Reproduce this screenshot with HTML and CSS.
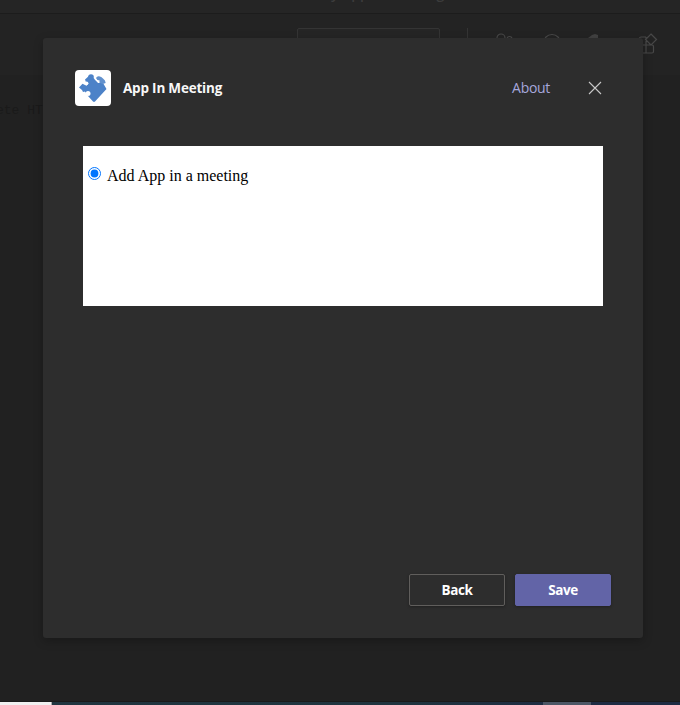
FILE: index.html
```html
<!DOCTYPE html>
<html lang="en">
<head>
<meta charset="utf-8">
<title>App In Meeting</title>
<link rel="stylesheet" href="styles.css">
</head>
<body>
<div class="window">
  <div class="titlebar"><span class="window-title">My App In Meeting</span></div>
  <div class="toolbar">
    <div class="field"></div>
    <div class="divider"></div>
    <div class="tools">
      <svg width="22" height="22" viewBox="0 0 22 22"><circle cx="7" cy="5" r="4"/><circle cx="15.500" cy="6" r="2.500"/><path d="M1 20v-4q0-3 3-3h6q3 0 3 3v4"/></svg>
      <svg width="22" height="22" viewBox="0 0 22 22"><circle cx="10" cy="10" r="8.500"/></svg>
      <svg width="22" height="22" viewBox="0 0 22 22"><path class="solid" d="M-2 10V5l4-3 3-1 3 1v8z"/></svg>
      <svg width="22" height="22" viewBox="0 0 22 22"><path d="M8 4H3q-1.500 0-1.500 1.500v13q0 1.500 1.500 1.500h11q1.500 0 1.500-1.500v-5q0-1.500-1.500-1.500h-13M8 4v16M13 1l5.500 5.500-5.500 5.500-5.500-5.500z"/></svg>
    </div>
  </div>
  <div class="content"><span class="code">ete HT</span></div>
  <div class="taskbar"><div class="search"></div><div class="task"></div></div>
</div>
<div class="dialog">
  <header>
    <svg class="logo" width="36" height="36" viewBox="0 0 36 36">
      <rect width="36" height="36" rx="4" fill="#fff"/>
      <g fill="#4c82c8">
        <path d="M10 9.500L15 5l4 3.500 4 4.500h5l3.500 6L20 31.500q-1 .8-2 0L13 26l-4-6 3-5z"/>
        <circle cx="16" cy="7" r="2.800"/>
        <path d="M4 17.500l3.500-3.700L12 16v5l-4 1-1-2z"/>
      </g>
      <path fill="#6291cd" d="M21 8q1-2 3-1.700 2.500.2 4 2.200 2.500 1.500 2.700 4.500l-3 1-3.500-1.500.5-2-2.700-.5z"/>
      <circle cx="11.500" cy="13.300" r="1.900" fill="#fff"/>
      <circle cx="13" cy="23.500" r="2.500" fill="#fff"/>
      <path d="M20 8.500q2 2.500 4 3.500" stroke="#fff" stroke-width="1.300" fill="none"/>
    </svg>
    <h1>App In Meeting</h1>
    <a class="about">About</a>
    <svg class="close" width="14" height="14" viewBox="0 0 14 14"><path d="M1 1l12 12M13 1L1 13"/></svg>
  </header>
  <main>
    <label><input type="radio" checked><span>Add App in a meeting</span></label>
  </main>
  <footer>
    <button>Back</button>
    <button class="primary">Save</button>
  </footer>
</div>
</body>
</html>
```

FILE: styles.css
```css
* { box-sizing: border-box; }
html, body { height: 100%; }
body {
  margin: 0;
  overflow: hidden;
  background: #212121;
  font-family: "Open Sans", sans-serif;
}
.window {
  height: 705px;
  display: flex;
  flex-direction: column;
}
.titlebar {
  height: 14px;
  flex: none;
  background: #252525;
  border-bottom: 1px solid #1c1c1c;
  overflow: hidden;
  padding-left: 318px;
}
.window-title {
  display: block;
  margin-top: -15px;
  font-size: 14px;
  font-weight: 600;
  line-height: 18px;
  color: #3c3c3c;
  white-space: nowrap;
}
.toolbar {
  height: 61px;
  flex: none;
  background: #232323;
  display: flex;
  padding: 14px 0 0 297px;
  overflow: hidden;
}
.field {
  width: 143px;
  height: 32px;
  background: #252525;
  border: 1px solid #343434;
  border-radius: 2px;
}
.divider {
  width: 1px;
  height: 32px;
  margin-left: 27px;
  background: #343434;
}
.tools {
  display: flex;
  gap: 26px;
  margin: 5px 0 0 26px;
}
.tools svg { fill: none; stroke: #484848; stroke-width: 1.2; overflow: visible; }
.tools .solid { fill: #414141; stroke: none; }
.content {
  flex: 1;
  background: #212121;
  padding-top: 28px;
  border-bottom: 1px solid #1a1a1a;
}
.code {
  display: block;
  margin-left: -4px;
  font: 13px/16px "Liberation Mono", monospace;
  color: #1a1a1a;
}
.taskbar {
  height: 3px;
  display: flex;
  background: linear-gradient(90deg, #213640, #20343f 60%, #1e2b43 85%);
}
.search { width: 52px; background: #f0f0f0; border-right: 1px solid #aaa; }
.task { width: 48px; margin-left: 491px; background: #4c5665; }

.dialog {
  position: absolute;
  left: 43px;
  top: 38px;
  width: 600px;
  height: 600px;
  display: flex;
  flex-direction: column;
  padding: 32px;
  background: #2d2d2d;
  border-radius: 3px;
  box-shadow: 0 3px 10px rgba(0, 0, 0, .25);
}
header {
  height: 36px;
  display: flex;
  align-items: center;
}
h1 {
  margin: 0 auto 0 12px;
  font-size: 13.5px;
  font-weight: 700;
  line-height: 20px;
  letter-spacing: -.2px;
  color: #f8f8f8;
}
.about {
  margin-right: 38px;
  font-size: 14px;
  line-height: 20px;
  letter-spacing: -.3px;
  color: #a6a7dc;
}
.close { margin-right: 9px; fill: none; stroke: #c8c8c8; stroke-width: 1.1; }
main {
  width: 520px;
  height: 160px;
  margin: 40px 0 0 8px;
  padding: 21px 5px;
  background: #fff;
}
label {
  display: flex;
  font: 16px/18px "Liberation Serif", serif;
  color: #000;
}
input { width: 13px; height: 13px; margin: 0 6px 0 0; accent-color: #0075ff; }
footer {
  display: flex;
  justify-content: flex-end;
  gap: 10px;
  margin-top: auto;
}
button {
  width: 96px;
  height: 32px;
  padding: 0;
  background: #2d2d2d;
  border: 1px solid #605e5c;
  border-radius: 2px;
  box-shadow: 0 1px 3px rgba(0, 0, 0, .3);
  color: #fff;
  font: 700 13.5px/20px "Open Sans", sans-serif;
  letter-spacing: -.4px;
}
.primary { background: #6264a7; border-color: #6264a7; }
```
